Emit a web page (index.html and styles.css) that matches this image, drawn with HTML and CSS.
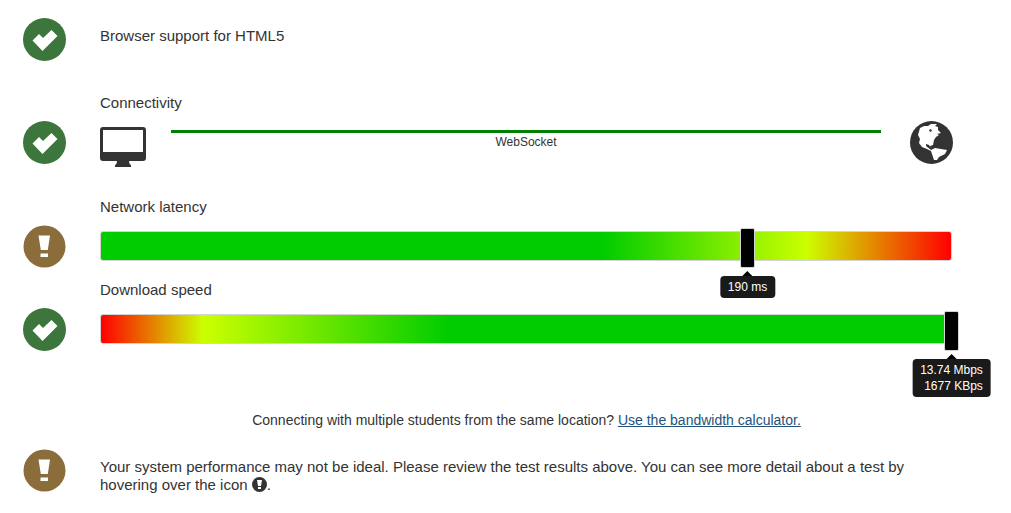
FILE: index.html
```html
<!DOCTYPE html>
<html lang="en">
<head>
<meta charset="utf-8">
<title>System check</title>
<link rel="stylesheet" href="styles.css">
</head>
<body>
<svg class="symbols" aria-hidden="true">
  <symbol id="check" viewBox="0 0 43 43"><circle cx="21.500" cy="21.500" r="21.500" fill="currentColor"/><path fill="#fff" d="M9.500 22.500 16 16 20 20 28.500 12 34.500 18 19.500 33z"/></symbol>
  <symbol id="warn" viewBox="0 0 43 43"><circle cx="21.500" cy="21.500" r="21" fill="currentColor"/><path fill="#fff" d="M15.500 10.500h11.500l-2.200 14.500h-7zM17.500 28.500h7.500v3.500h-7.500z"/></symbol>
</svg>
<main class="checks">
  <section class="check check-browser">
    <svg class="status pass" role="img" aria-label="Passed"><use href="#check"/></svg>
    <h2 class="label">Browser support for HTML5</h2>
  </section>
  <section class="check check-connectivity">
    <h2 class="label">Connectivity</h2>
    <svg class="status pass" role="img" aria-label="Passed"><use href="#check"/></svg>
    <div class="connection">
      <svg class="monitor" viewBox="0 0 46 40" aria-hidden="true"><path fill="currentColor" fill-rule="evenodd" d="M3 0h40q3 0 3 3v28q0 3-3 3H29q0 3 2 4v2H15v-2q2-1 2-4H3q-3 0-3-3V3q0-3 3-3zm0 3v22h40V3z"/></svg>
      <div class="link-line">WebSocket</div>
      <svg class="globe" viewBox="0 0 43 43" aria-hidden="true"><circle cx="21.500" cy="21.500" r="21.500" fill="currentColor"/><path fill="#fff" d="M10 7 14 5 18 5 21 3 27 3 25 5 28 6 28 9 31 12 27 13 29 14 26 16 24 19 23 24 20 25 21 27 19 24 16 23 16 25 21 29 25 27 37 29 35 33 29 36 27 39 24 39 22 33 21 30 17 28 12 26 9 22 10 18 8 14z"/><path fill="currentColor" d="m19 9 2-1 1 2-2 1z"/></svg>
    </div>
  </section>
  <section class="check check-latency">
    <h2 class="label">Network latency</h2>
    <svg class="status caution" role="img" aria-label="Warning"><use href="#warn"/></svg>
    <div class="bar latency"><div class="marker" style="left:76%"><div class="tip">190 ms</div></div></div>
  </section>
  <section class="check check-speed">
    <h2 class="label">Download speed</h2>
    <svg class="status pass" role="img" aria-label="Passed"><use href="#check"/></svg>
    <div class="bar speed"><div class="marker" style="left:100%"><div class="tip">13.74 Mbps<br>1677 KBps</div></div></div>
  </section>
  <p class="note">Connecting with multiple students from the same location? <a href="#calculator">Use the bandwidth calculator.</a></p>
  <section class="check summary">
    <svg class="status caution" role="img" aria-label="Warning"><use href="#warn"/></svg>
    <p class="message">Your system performance may not be ideal. Please review the test results above. You can see more detail about a test by hovering over the icon <svg class="inline-icon" viewBox="0 0 15 15" aria-hidden="true"><path fill="currentColor" fill-rule="evenodd" d="M0 7.500a7.500 7.500 0 1 1 15 0a7.500 7.500 0 1 1-15 0zM5 3h5L9 9H6zM6 10h3v2H6z"/></svg>.</p>
  </section>
</main>
</body>
</html>
```
FILE: styles.css
```css
body {
  margin: 0;
  background: #fff;
  color: #333;
  font: 15px/18px "Liberation Sans", Arial, sans-serif;
}
.symbols { position: absolute; width: 0; height: 0; }
.checks { padding: 18px 58px 18px 23px; }
.check {
  display: grid;
  grid-template-columns: 43px minmax(0, 1fr);
  column-gap: 34px;
  align-items: center;
}
.label {
  grid-column: 2;
  margin: 0;
  font-size: 15px;
  font-weight: 400;
}
.status { width: 43px; height: 43px; }
.pass { color: #3c763d; }
.caution { color: #8a6d3b; }
.check-browser { align-items: start; }
.check-browser .label { padding-top: 9px; }
.check-connectivity { align-items: start; margin-top: 33px; row-gap: 9px; }
.check-latency { margin-top: 34px; }
.check-latency, .check-speed { row-gap: 9px; }
.check-speed { margin-top: 13px; }
.connection { display: flex; align-items: flex-start; }
.monitor { width: 46px; height: 40px; margin: 6px 25px -3px 0; }
.globe { display: block; width: 43px; height: 43px; margin-left: 29px; }
.link-line {
  flex: 1;
  margin-top: 9px;
  border-top: 3px solid #008000;
  font-size: 12px;
  text-align: center;
}
.bar {
  position: relative;
  box-sizing: border-box;
  height: 30px;
  margin: 0 1px 1px 0;
  border: 1px solid #d3d3d3;
  border-radius: 3px;
}
.latency { background: linear-gradient(to right, #00cc00 59%, #ccff00 83%, #ff0000); }
.speed { background: linear-gradient(to right, #ff0000, #ccff00 12%, #00cc00 41%); }
.marker {
  position: absolute;
  top: -4px;
  box-sizing: border-box;
  width: 15px;
  height: 40px;
  margin-left: -7px;
  border: 1px solid #d3d3d3;
  border-radius: 2px;
  background: #000;
}
.tip {
  position: absolute;
  top: 47px;
  left: 50%;
  transform: translateX(-50%);
  padding: 3px 8px;
  border-radius: 4px;
  background: #1a1a1a;
  color: #fff;
  font-size: 12px;
  line-height: 16px;
  text-align: right;
  white-space: nowrap;
}
.tip::before {
  content: "";
  position: absolute;
  top: -5px;
  left: 50%;
  margin-left: -5px;
  border: 5px solid transparent;
  border-top: 0;
  border-bottom-color: #000;
}
.note {
  margin: 60px 0 20px 77px;
  font-size: 14px;
  text-align: center;
}
.note a { color: #23527c; }
.message { margin: 9px 0 0; }
.summary { align-items: start; }
.inline-icon { width: 15px; height: 15px; vertical-align: -2px; }
```
